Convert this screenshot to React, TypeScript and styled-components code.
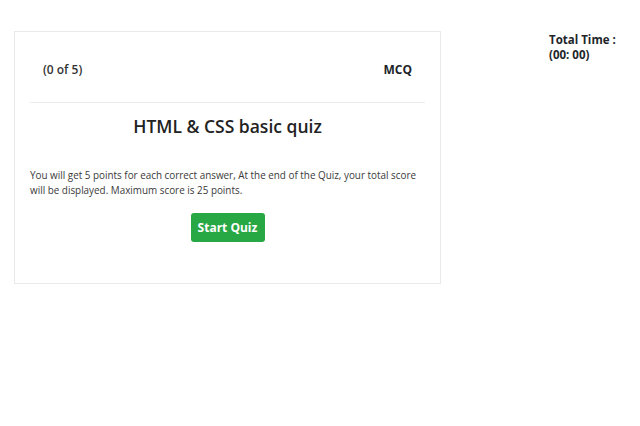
import React from "react";
import styled, { createGlobalStyle } from "styled-components";

const Global = createGlobalStyle`
  html, body { margin: 0; padding: 0; background: #fff; }
  body { font-family: "Open Sans", "Noto Sans", sans-serif; color: #212529; }
`;

const Page = styled.div`
  display: flex;
  align-items: flex-start;
  padding: 31px 0 0 14px;
`;

const Card = styled.div`
  width: 427px;
  height: 253px;
  box-sizing: border-box;
  border: 1px solid #e9e9e9;
  padding: 0 15px;
  display: flex;
  flex-direction: column;
`;

const Header = styled.div`
  display: flex;
  justify-content: space-between;
  align-items: center;
  height: 71px;
  padding: 5px 13px 0 13px;
  box-sizing: border-box;
  border-bottom: 1px solid #ececec;
  font-size: 12px;
`;

const Count = styled.span`
  font-weight: 600;
  color: #333;
`;

const Kind = styled.span`
  font-weight: 700;
`;

const Title = styled.h2`
  margin: 11px 0 0;
  text-align: center;
  font-size: 17.5px;
  font-weight: 600;
  line-height: 24px;
  color: #222;
`;

const Info = styled.p`
  margin: 30px 0 0;
  font-size: 9.9px;
  line-height: 15px;
  color: #3a3a3a;
`;

const Actions = styled.div`
  display: flex;
  justify-content: center;
  margin-top: 15px;
`;

const StartButton = styled.button`
  width: 74px;
  height: 29px;
  border: none;
  border-radius: 3px;
  background: #28a745;
  color: #fff;
  font-family: inherit;
  font-size: 12px;
  font-weight: 700;
  padding: 0;
  cursor: pointer;
`;

const Timer = styled.div`
  margin-left: 108px;
  padding-top: 1px;
  font-size: 11.5px;
  font-weight: 700;
  line-height: 15px;
`;

export default function App() {
  return (
    <>
      <Global />
      <Page>
        <Card>
          <Header>
            <Count>(0 of 5)</Count>
            <Kind>MCQ</Kind>
          </Header>
          <Title>HTML &amp; CSS basic quiz</Title>
          <Info>
            You will get 5 points for each correct answer, At the end of the Quiz, your total score will be displayed. Maximum score is 25 points.
          </Info>
          <Actions>
            <StartButton>Start Quiz</StartButton>
          </Actions>
        </Card>
        <Timer>
          Total Time :<br />(00: 00)
        </Timer>
      </Page>
    </>
  );
}
